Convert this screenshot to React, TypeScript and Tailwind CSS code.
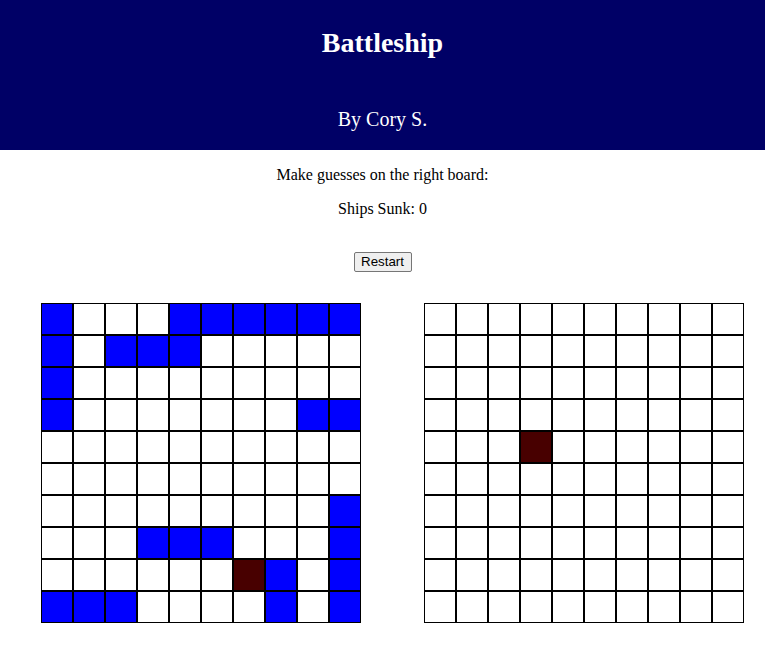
import React from 'react';

type Cell = 'empty' | 'ship' | 'hit';

const buildBoard = (ships: [number, number][], hits: [number, number][]): Cell[][] => {
  const board: Cell[][] = Array.from({ length: 10 }, () => Array.from({ length: 10 }, () => 'empty' as Cell));
  ships.forEach(([r, c]) => (board[r][c] = 'ship'));
  hits.forEach(([r, c]) => (board[r][c] = 'hit'));
  return board;
};

const playerShips: [number, number][] = [
  [0, 0], [1, 0], [2, 0], [3, 0],
  [0, 4], [0, 5], [0, 6], [0, 7], [0, 8], [0, 9],
  [1, 2], [1, 3], [1, 4],
  [3, 8], [3, 9],
  [6, 9], [7, 9], [8, 9], [9, 9],
  [7, 3], [7, 4], [7, 5],
  [8, 7], [9, 7],
  [9, 0], [9, 1], [9, 2],
];

const playerBoard = buildBoard(playerShips, [[8, 6]]);
const enemyBoard = buildBoard([], [[4, 3]]);

const cellColor: Record<Cell, string> = {
  empty: 'bg-white',
  ship: 'bg-[#0000ff]',
  hit: 'bg-[#480000]',
};

const Board: React.FC<{ board: Cell[][] }> = ({ board }) => (
  <div className="flex flex-col w-[320px]">
    {board.map((row, r) => (
      <div key={r} className="flex">
        {row.map((cell, c) => (
          <div key={c} className={`w-8 h-8 border border-black ${cellColor[cell]}`}></div>
        ))}
      </div>
    ))}
  </div>
);

export default function App() {
  return (
    <div className="min-h-[671px] bg-white text-black font-['Liberation_Serif','Times_New_Roman',serif]">
      <header className="bg-[#000066] text-white text-center h-[150px] pt-[27px]">
        <h1 className="text-[28px] leading-[32px] font-bold">Battleship</h1>
        <h2 className="text-[20px] leading-[23px] mt-[49px]">By Cory S.</h2>
      </header>

      <div className="text-center text-[16px] leading-[18px]">
        <p className="mt-4">Make guesses on the right board:</p>
        <p className="mt-4">Ships Sunk: 0</p>
        <div className="mt-[34px] h-5 flex justify-center">
          <button className="h-5 w-[58px] px-[6px] bg-[#efefef] border border-[#767676] rounded-[2px] text-[13.33px] leading-none font-['Liberation_Sans',Arial,sans-serif] text-black">
            Restart
          </button>
        </div>
      </div>

      <div className="flex pl-[41px] gap-[63px] mt-[31px]">
        <Board board={playerBoard} />
        <Board board={enemyBoard} />
      </div>
    </div>
  );
}
